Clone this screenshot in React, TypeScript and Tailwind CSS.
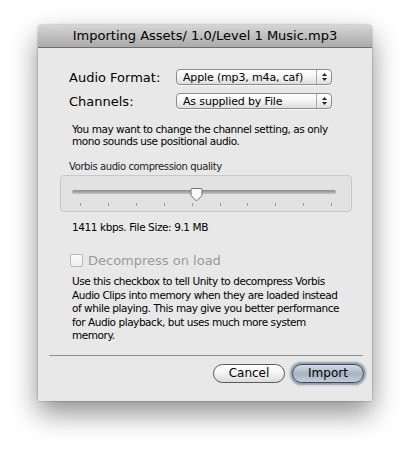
import React from "react";

const font = { fontFamily: '"DejaVu Sans", "Liberation Sans", sans-serif' };

function Popup({ text }: { text: string }) {
  return (
    <div className="flex h-[16px] w-[156px] rounded-[4px] border border-[#8c8c8c] bg-gradient-to-b from-[#ffffff] via-[#f4f4f4] to-[#dedede] shadow-[0_1px_0_rgba(255,255,255,0.6)]">
      <div className="flex flex-1 items-center pl-[6px] text-[11px] leading-none tracking-[-0.15px] text-black">{text}</div>
      <div className="flex w-[15px] flex-col items-center justify-center gap-[2px] border-l border-[#a8a8a8]">
        <svg width="5" height="3" viewBox="0 0 5 3"><path d="M0 3 L2.5 0 L5 3 Z" fill="#222" /></svg>
        <svg width="5" height="3" viewBox="0 0 5 3"><path d="M0 0 L2.5 3 L5 0 Z" fill="#222" /></svg>
      </div>
    </div>
  );
}

export default function App() {
  const ticks = [0, 1, 2, 3, 4, 5, 6, 7, 8, 9];
  return (
    <div className="h-[456px] w-[412px] overflow-hidden bg-white pl-[38px] pt-[25px]" style={font}>
      <div className="flex h-[376px] w-[334px] flex-col overflow-hidden rounded-t-[4px] bg-[#e8e8e8] shadow-[0_12px_28px_rgba(0,0,0,0.45),0_0_2px_rgba(0,0,0,0.4)]">
        <div className="flex h-[23px] items-center justify-center border-b border-[#6f6f6f] bg-gradient-to-b from-[#d6d6d6] to-[#a9a9a9] text-[13px] text-black">
          Importing Assets/ 1.0/Level 1 Music.mp3
        </div>
        <div className="flex flex-col pt-[21px]">
          <div className="flex items-center">
            <div className="w-[138px] pl-[31px] text-[13px] leading-none text-black">Audio Format:</div>
            <Popup text="Apple (mp3, m4a, caf)" />
          </div>
          <div className="mt-[8px] flex items-center">
            <div className="w-[138px] pl-[31px] text-[13px] leading-none text-black">Channels:</div>
            <Popup text="As supplied by File" />
          </div>
          <div className="mt-[14px] whitespace-nowrap pl-[34px] text-[10.5px] leading-[12px] tracking-[-0.45px] text-black">
            You may want to change the channel setting, as only
            <br />
            mono sounds use positional audio.
          </div>
          <div className="mt-[13px] pl-[31px] text-[10px] leading-[14px] tracking-[-0.4px] text-[#222]">Vorbis audio compression quality</div>
          <div className="relative ml-[22px] mt-[1px] h-[37px] w-[292px] rounded-[4px] border border-[#c8c8c8] bg-[#e2e2e2]">
            <div className="absolute left-[11px] top-[14px] h-[4px] w-[264px] rounded-full bg-gradient-to-b from-[#8a8a8a] to-[#c4c4c4]" />
            {ticks.map((i) => (
              <div
                key={i}
                className="absolute top-[27px] h-[3px] w-[1px] bg-[#9a9a9a]"
                style={{ left: 19 + i * 27.9 }}
              />
            ))}
            <svg className="absolute left-[129px] top-[12px]" width="13" height="14" viewBox="0 0 13 14">
              <path d="M1 1.5 Q1 0.5 2 0.5 L11 0.5 Q12 0.5 12 1.5 L12 7.5 L6.5 13 L1 7.5 Z" fill="#fafafa" stroke="#6f6f6f" strokeWidth="1" />
            </svg>
          </div>
          <div className="mt-[8px] pl-[34px] text-[10.5px] leading-[14px] tracking-[-0.4px] text-black">1411 kbps. File Size: 9.1 MB</div>
          <div className="mt-[19px] flex h-[14px] items-center pl-[32px]">
            <div className="h-[13px] w-[13px] rounded-[2px] border border-[#b9b9b9] bg-gradient-to-b from-[#fdfdfd] to-[#ececec]" />
            <div className="ml-[5px] text-[13px] leading-none text-[#9a9a9a]">Decompress on load</div>
          </div>
          <div className="mt-[8px] whitespace-nowrap pl-[34px] text-[10.5px] leading-[13.5px] tracking-[-0.45px] text-black">
            Use this checkbox to tell Unity to decompress Vorbis
            <br />
            Audio Clips into memory when they are loaded instead
            <br />
            of while playing. This may give you better performance
            <br />
            for Audio playback, but uses much more system
            <br />
            memory.
          </div>
          <div className="ml-[11px] mt-[12px] h-[1px] w-[314px] bg-[#8f8f8f]" />
          <div className="mt-[8px] flex justify-end gap-[7px] pr-[8px]">
            <div className="flex h-[19px] w-[72px] items-center justify-center rounded-full border border-[#5a5a5a] bg-gradient-to-b from-[#ffffff] via-[#f2f2f2] to-[#dcdcdc] text-[12px] text-black">
              Cancel
            </div>
            <div className="flex h-[19px] w-[72px] items-center justify-center rounded-full border border-[#3c4656] bg-gradient-to-b from-[#d7dde6] via-[#a8b3c2] to-[#c3cbd6] text-[12px] text-black shadow-[0_0_2px_2px_rgba(70,90,120,0.55)]">
              Import
            </div>
          </div>
        </div>
      </div>
    </div>
  );
}
